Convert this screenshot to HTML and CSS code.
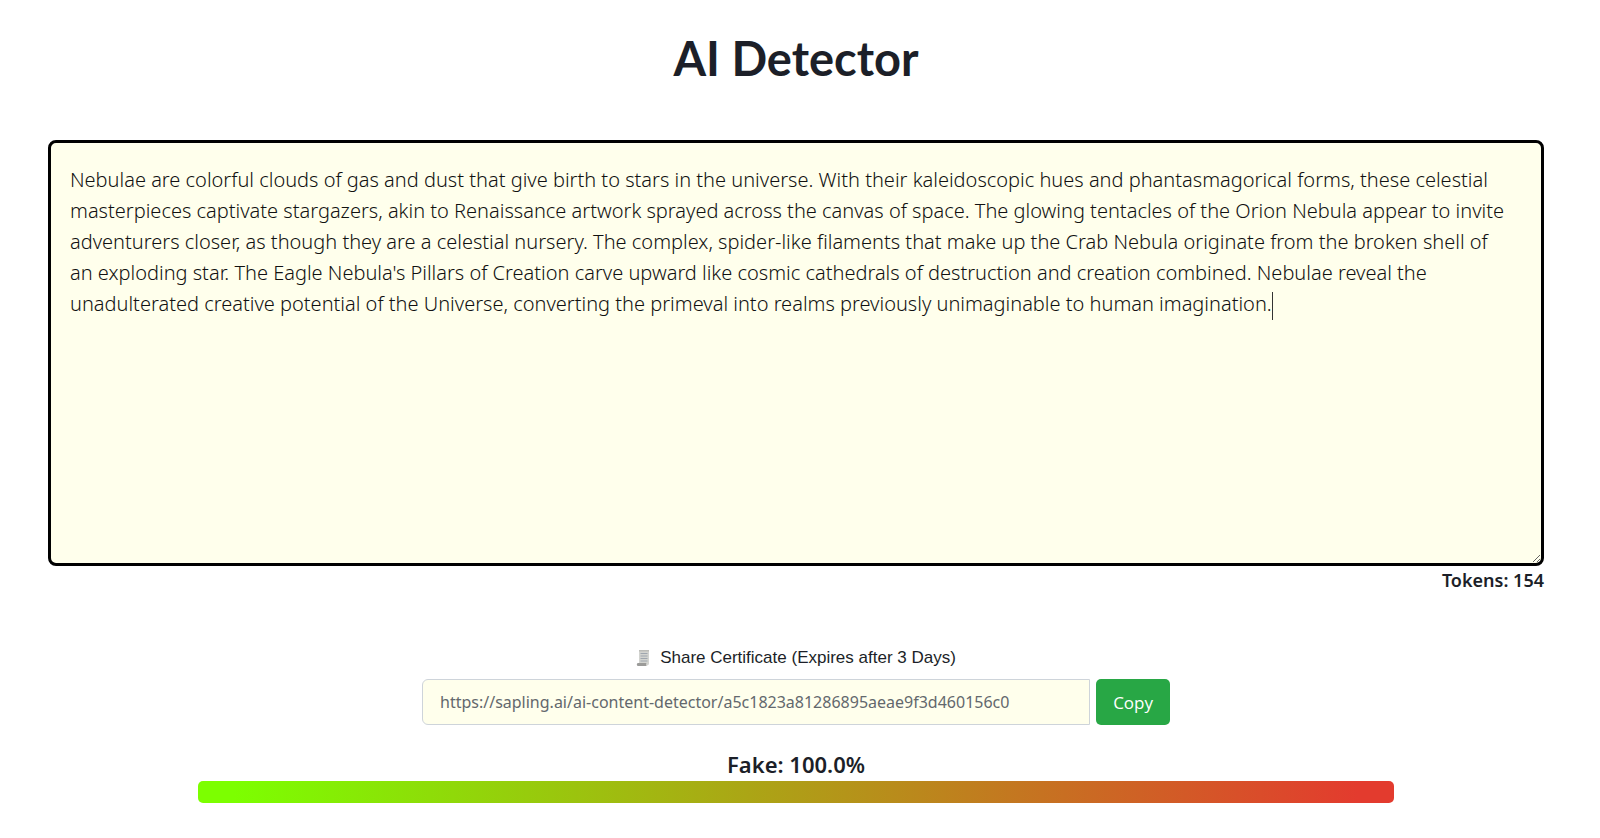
FILE: index.html
```html
<!DOCTYPE html>
<html lang="en">
<head>
    <meta charset="UTF-8">
    <meta name="viewport" content="width=device-width, initial-scale=1.0">
    <title>AI Detector</title>
    <link rel="stylesheet" href="styles.css">
</head>
<body>
    <main class="container">
        <h1 class="title">AI Detector</h1>

        <div class="editor">
            <textarea id="content" class="content-input" aria-label="Text to check" spellcheck="false" autofocus>Nebulae are colorful clouds of gas and dust that give birth to stars in the universe. With their kaleidoscopic hues and phantasmagorical forms, these celestial masterpieces captivate stargazers, akin to Renaissance artwork sprayed across the canvas of space. The glowing tentacles of the Orion Nebula appear to invite adventurers closer, as though they are a celestial nursery. The complex, spider-like filaments that make up the Crab Nebula originate from the broken shell of an exploding star. The Eagle Nebula's Pillars of Creation carve upward like cosmic cathedrals of destruction and creation combined. Nebulae reveal the unadulterated creative potential of the Universe, converting the primeval into realms previously unimaginable to human imagination.</textarea>
            <div class="caret-layer" aria-hidden="true"><span id="beforeCaret"></span><span class="caret"></span></div>
        </div>
        <p class="tokens">Tokens: 154</p>

        <div class="share">
            <label for="shareLink" class="share-label">
                <svg class="scroll-icon" viewBox="0 0 14 18" aria-hidden="true">
                    <path d="M3 1h10v13.500q0 2-2 2H3z" fill="#d3d4d0"/>
                    <path d="M3 1h10v1.500H3z" fill="#bcbdb9"/>
                    <path d="M4.500 4.500h7M4.500 7h7M4.500 9.500h7M4.500 12h7" stroke="#9fa6ae" stroke-width="1"/>
                    <path d="M1.500 14h9q-1 1 0 3h-9q-1.500-1.500 0-3z" fill="#9b9b99"/>
                </svg>
                Share Certificate (Expires after 3 Days)
            </label>
            <div class="share-row">
                <input type="text" id="shareLink" class="share-input" value="https://sapling.ai/ai-content-detector/a5c1823a81286895aeae9f3d460156c0" readonly>
                <button type="button" class="copy-btn">Copy</button>
            </div>
        </div>

        <div class="result">
            <p class="score">Fake: 100.0%</p>
            <div class="score-bar"></div>
        </div>
    </main>

    <script>
        const content = document.getElementById('content');
        const beforeCaret = document.getElementById('beforeCaret');

        // Repeat the text up to the cursor so the thin caret lands after it
        function updateCaret() {
            beforeCaret.textContent = content.value.slice(0, content.selectionEnd);
        }

        content.focus();
        content.setSelectionRange(content.value.length, content.value.length);
        updateCaret();

        content.addEventListener('input', updateCaret);
        content.addEventListener('keyup', updateCaret);
        content.addEventListener('click', updateCaret);

        document.querySelector('.copy-btn').addEventListener('click', function() {
            navigator.clipboard.writeText(document.getElementById('shareLink').value);
        });
    </script>
</body>
</html>
```

FILE: styles.css
```css
* {
    margin: 0;
    padding: 0;
    box-sizing: border-box;
}

body {
    background: #fff;
    color: #1c1f28;
    font-family: 'Noto Sans', 'Open Sans', sans-serif;
}

.container {
    width: 100%;
    padding: 28px 56px 32px 48px;
}

.title {
    font-family: Lato, sans-serif;
    font-size: 47px;
    font-weight: 700;
    line-height: 60px;
    text-align: center;
    margin-bottom: 52px;
}

.editor {
    position: relative;
}

.content-input,
.caret-layer {
    padding: 21px 32px 20px 19px;
    border: 3px solid #000;
    font-family: inherit;
    font-size: 20px;
    font-weight: 300;
    line-height: 31px;
}

.content-input {
    display: block;
    width: 100%;
    height: 426px;
    background: #ffffec;
    border-radius: 8px;
    outline: none;
    color: #111;
    caret-color: transparent;
    resize: vertical;
}

.caret-layer {
    position: absolute;
    inset: 0;
    border-color: transparent;
    white-space: pre-wrap;
    overflow-wrap: break-word;
    visibility: hidden;
    pointer-events: none;
}

.caret {
    display: inline-block;
    width: 1px;
    height: 28px;
    margin-right: -1px;
    vertical-align: middle;
    background: #333;
}

.content-input:focus + .caret-layer .caret {
    visibility: visible;
}

.tokens {
    font-size: 18px;
    font-weight: 600;
    line-height: 28px;
    text-align: right;
}

.share {
    width: 50%;
    margin: 50px auto 0;
}

.share-label {
    display: flex;
    align-items: center;
    justify-content: center;
    gap: 10px;
    margin-bottom: 7px;
    font-family: 'Liberation Sans', sans-serif;
    font-size: 17px;
    line-height: 28px;
}

.scroll-icon {
    width: 14px;
    height: 18px;
}

.share-row {
    display: flex;
    gap: 6px;
}

.share-input {
    flex: 1;
    min-width: 0;
    height: 46px;
    padding: 0 17px;
    background: #ffffec;
    border: 1px solid #ced4da;
    border-radius: 6px 0 0 6px;
    color: #63686d;
    font-family: inherit;
    font-size: 16px;
}

.copy-btn {
    padding: 0 17px;
    background: #28a745;
    border: none;
    border-radius: 5px;
    color: #fff;
    font-family: 'Open Sans', sans-serif;
    font-size: 17px;
    cursor: pointer;
}

.result {
    width: 80%;
    margin: 23px auto 0;
}

.score {
    font-size: 22px;
    font-weight: 600;
    line-height: 33px;
    text-align: center;
}

.score-bar {
    height: 22px;
    border-radius: 5px;
    background: linear-gradient(90deg, #7cff00 3%, #e33b2e 97%);
}
```
